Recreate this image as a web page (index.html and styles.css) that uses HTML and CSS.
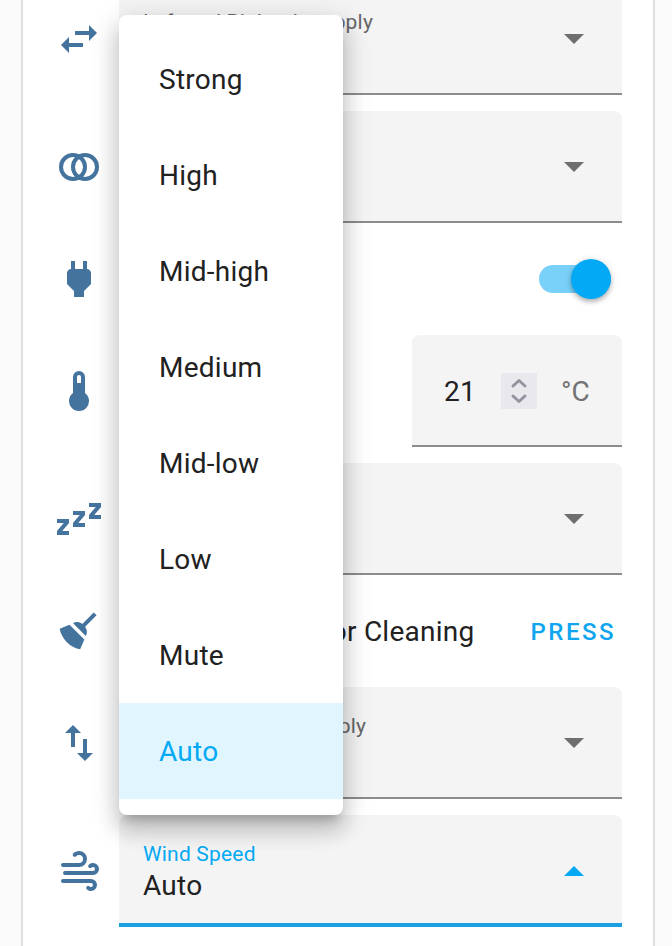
FILE: index.html
```html
<!DOCTYPE html>
<html lang="en">
<head>
<meta charset="utf-8">
<title>Air Conditioner</title>
<link rel="stylesheet" href="styles.css">
</head>
<body>
<main class="card">
  <div class="row">
    <svg class="icon" viewBox="0 0 24 24"><path d="M21,9L17,5V8H10V10H17V13M7,11L3,15L7,19V16H14V14H7V11Z"/></svg>
    <div class="field"><span class="label">Left and Right air supply</span><span class="value">&nbsp;</span><i class="arrow"></i></div>
  </div>
  <div class="row">
    <svg class="icon" viewBox="0 0 24 24"><g class="rings"><circle cx="9" cy="12" r="6"/><circle cx="15" cy="12" r="6"/></g></svg>
    <div class="field"><i class="arrow"></i></div>
  </div>
  <div class="row row-short">
    <svg class="icon" viewBox="0 0 24 24"><path d="M16,7V3H14V7H10V3H8V7H8C7,7 6,8 6,9V14.5L9.5,18V21H14.5V18L18,14.5V9C18,8 17,7 16,7Z"/></svg>
    <div class="line"><span class="switch"><span class="thumb"></span></span></div>
  </div>
  <div class="row">
    <svg class="icon" viewBox="0 0 24 24"><path d="M15 13V5A3 3 0 0 0 9 5V13A5 5 0 1 0 15 13M12 4A1 1 0 0 1 13 5V8H11V5A1 1 0 0 1 12 4Z"/></svg>
    <div class="field number"><span class="digits">21</span>
      <svg class="spinner" viewBox="0 0 36 36"><path d="M12 13L18 7.5L24 13M12 23L18 28.5L24 23"/></svg>
      <span class="unit">°C</span></div>
  </div>
  <div class="row">
    <svg class="icon" viewBox="0 0 24 24"><path d="M23,12H17V10L20.39,6H17V4H23V6L19.62,10H23V12M15,16H9V14L12.39,10H9V8H15V10L11.62,14H15V16M7,20H1V18L4.39,14H1V12H7V14L3.62,18H7V20Z"/></svg>
    <div class="field"><i class="arrow"></i></div>
  </div>
  <div class="row row-short">
    <svg class="icon" viewBox="0 0 24 24"><path d="M19.36,2.72L20.78,4.14L15.06,9.85C16.13,11.39 16.28,13.24 15.38,14.44L9.06,8.12C10.26,7.22 12.11,7.37 13.65,8.44L19.36,2.72M5.93,17.57C3.92,15.56 2.69,13.16 2.35,10.92L7.23,8.83L14.67,16.27L12.58,21.15C10.34,20.81 7.94,19.58 5.93,17.57Z"/></svg>
    <div class="line"><span class="name">Indoor Cleaning</span><span class="press">PRESS</span></div>
  </div>
  <div class="row">
    <svg class="icon" viewBox="0 0 24 24"><path d="M9,3L5,7H8V14H10V7H13M16,17V10H14V17H11L15,21L19,17H16Z"/></svg>
    <div class="field"><span class="label">Up and Down air supply</span><span class="value">&nbsp;</span><i class="arrow"></i></div>
  </div>
  <div class="row">
    <svg class="icon" viewBox="0 0 24 24"><path d="M4,10A1,1 0 0,1 3,9A1,1 0 0,1 4,8H12A2,2 0 0,0 14,6A2,2 0 0,0 12,4C11.45,4 10.95,4.22 10.59,4.59C10.2,5 9.56,5 9.17,4.59C8.78,4.2 8.78,3.56 9.17,3.17C9.9,2.45 10.9,2 12,2A4,4 0 0,1 16,6A4,4 0 0,1 12,10H4M19,12A1,1 0 0,0 20,11A1,1 0 0,0 19,10C18.72,10 18.47,10.11 18.29,10.29C17.9,10.68 17.27,10.68 16.88,10.29C16.5,9.9 16.5,9.27 16.88,8.88C17.42,8.34 18.17,8 19,8A3,3 0 0,1 22,11A3,3 0 0,1 19,14H5A1,1 0 0,1 4,13A1,1 0 0,1 5,12H19M18,18H4A1,1 0 0,1 3,17A1,1 0 0,1 4,16H18A3,3 0 0,1 21,19A3,3 0 0,1 18,22C17.17,22 16.42,21.66 15.88,21.12C15.5,20.73 15.5,20.1 15.88,19.71C16.27,19.32 16.9,19.32 17.29,19.71C17.47,19.89 17.72,20 18,20A1,1 0 0,0 19,19A1,1 0 0,0 18,18Z"/></svg>
    <div class="field active"><span class="label">Wind Speed</span><span class="value">Auto</span><i class="arrow"></i>
      <ul class="menu">
        <li>Strong</li><li>High</li><li>Mid-high</li><li>Medium</li><li>Mid-low</li><li>Low</li><li>Mute</li><li class="selected">Auto</li>
      </ul>
    </div>
  </div>
</main>
</body>
</html>
```
FILE: styles.css
```css
* { box-sizing: border-box; }
html, body { height: 100%; overflow: hidden; }
body {
  margin: 0;
  padding: 0 17px 0 21px;
  background: #fafafa;
  color: #212121;
  font-family: Roboto, sans-serif;
  font-size: 28px;
}
.card {
  width: 634px;
  height: 1000px;
  margin-top: -17px;
  padding: 0 31px 0 32px;
  display: flex;
  flex-direction: column;
  gap: 16px;
  background: #fff;
  border: solid #dedede;
  border-width: 0 2px;
}
.row { display: flex; align-items: center; gap: 16px; height: 112px; flex: none; }
.row-short { height: 80px; }
.icon { width: 48px; height: 48px; flex: none; fill: #44739e; }
.rings { fill: none; stroke: #44739e; stroke-width: 2; }
.field {
  position: relative;
  flex: 1;
  height: 112px;
  padding: 26px 24px 0;
  display: flex;
  flex-direction: column;
  background: #f4f4f4;
  border-bottom: 2px solid #8c8c8c;
  border-radius: 8px 8px 0 0;
}
.label { font-size: 21px; line-height: 26px; letter-spacing: 0.19px; color: #666; }
.value { line-height: 34px; margin-top: 2px; letter-spacing: 0.25px; }
.arrow {
  position: absolute;
  right: 38px;
  top: 51px;
  border: solid transparent;
  border-width: 10px 10px 0;
  border-top-color: #6e6e6e;
}
.active { border-bottom: 4px solid #1ba1e2; }
.active .label { color: #03a9f4; }
.active .arrow { border-width: 0 10px 10px; border-bottom-color: #03a9f4; }
.line { flex: 1; display: flex; align-items: center; justify-content: flex-end; }
.switch { width: 72px; height: 28px; margin-right: 11px; border-radius: 14px; background: #79d1f9; display: flex; align-items: center; justify-content: flex-end; }
.thumb { width: 40px; height: 40px; flex: none; border-radius: 50%; background: #03a9f4; box-shadow: 0 3px 4px rgba(0,0,0,.22), 0 1px 8px rgba(0,0,0,.14); }
.name { letter-spacing: 0.25px; margin-right: 56px; }
.press { margin-right: 6px; padding-top: 2px; color: #0fa6ef; font-size: 24px; font-weight: 500; letter-spacing: 2.5px; }
.number { flex: none; width: 210px; margin-left: auto; padding: 2px 32px 0; flex-direction: row; align-items: center; }
.digits { letter-spacing: 0.25px; }
.spinner { width: 36px; height: 36px; flex: none; margin-left: 25px; background: #e9e9ed; fill: none; stroke: #9494a0; stroke-width: 3; stroke-linecap: round; stroke-linejoin: round; }
.unit { margin-left: 24px; color: #737373; }
.menu {
  position: absolute;
  left: 0;
  bottom: 108px;
  z-index: 2;
  width: 224px;
  margin: 0;
  padding: 16px 0;
  list-style: none;
  background: #fff;
  border-radius: 8px;
  box-shadow: 0 10px 10px -6px rgba(0,0,0,.2), 0 16px 20px 2px rgba(0,0,0,.14), 0 6px 28px 4px rgba(0,0,0,.12);
}
.menu li { height: 96px; padding-left: 40px; line-height: 97px; letter-spacing: 0.25px; }
.menu .selected { background: #e0f5fe; color: #03a9f4; }
```
